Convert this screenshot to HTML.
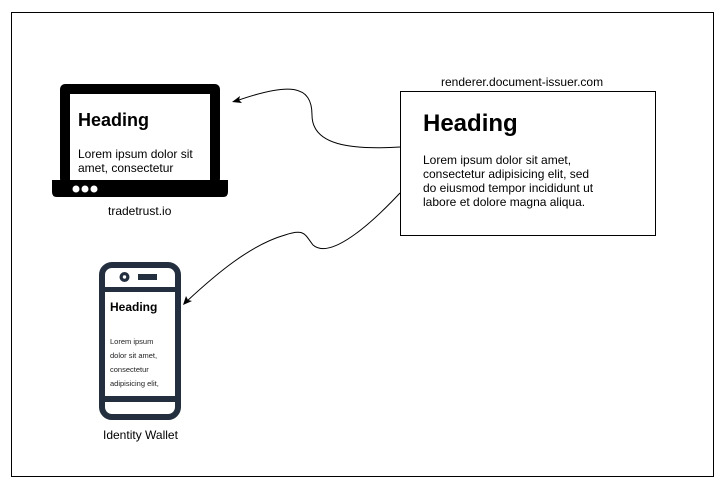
<!DOCTYPE html><html><head><style>body{margin:0;background:#fff;width:727px;height:495px;overflow:hidden}svg{display:block}text{font-family:"Liberation Sans",sans-serif}</style></head><body>
<svg width="727" height="495" viewBox="0 0 727 495">
<rect x="11.5" y="12.5" width="702" height="464" fill="#fff" stroke="#000"/>
<rect x="400.5" y="91.5" width="255" height="144" fill="#fff" stroke="#000"/>
<text x="441" y="86" font-size="12">renderer.document-issuer.com</text>
<text x="423" y="131" font-size="24" font-weight="bold">Heading</text>
<text font-size="12"><tspan x="423" y="164">Lorem ipsum dolor sit amet,</tspan><tspan x="423" y="178">consectetur adipisicing elit, sed</tspan><tspan x="423" y="192">do eiusmod tempor incididunt ut</tspan><tspan x="423" y="206">labore et dolore magna aliqua.</tspan></text>
<!-- laptop -->
<rect x="60" y="84" width="160" height="100" rx="5" fill="#000"/>
<rect x="70" y="94" width="140" height="90" fill="#fff"/>
<path d="M52 180H228V192Q228 197 223 197H57Q52 197 52 192Z" fill="#000"/>
<circle cx="76" cy="189" r="3.5" fill="#fff"/><circle cx="85" cy="189" r="3.5" fill="#fff"/><circle cx="94" cy="189" r="3.5" fill="#fff"/>
<text x="78" y="126" font-size="18" font-weight="bold">Heading</text>
<text font-size="12"><tspan x="78" y="158">Lorem ipsum dolor sit</tspan><tspan x="78" y="172">amet, consectetur</tspan></text>
<text x="108" y="215" font-size="12">tradetrust.io</text>
<!-- phone -->
<rect x="102" y="265" width="76" height="152" rx="10" fill="#fff" stroke="#232f3e" stroke-width="6"/>
<rect x="102" y="287" width="76" height="5" fill="#232f3e"/>
<rect x="102" y="396" width="76" height="6" fill="#232f3e"/>
<circle cx="124.5" cy="277" r="5" fill="#232f3e"/><circle cx="124.5" cy="277" r="1.7" fill="#fff"/>
<rect x="138" y="274" width="19" height="6" fill="#232f3e"/>
<text x="110" y="311" font-size="12" font-weight="bold">Heading</text>
<text font-size="7.5" fill="#222"><tspan x="110" y="344">Lorem ipsum</tspan><tspan x="110" y="358">dolor sit amet,</tspan><tspan x="110" y="372">consectetur</tspan><tspan x="110" y="386">adipisicing elit,</tspan></text>
<text x="103" y="439" font-size="12">Identity Wallet</text>
<!-- arrows -->
<path d="M400 147C350 150 312 145 312 115C312 85 290 82 236 101" fill="none" stroke="#000" stroke-width="1"/>
<path d="M232 102l8-6-1 4 3 3z" fill="#000"/>
<path d="M400 193C370 225 330 260 313 245C305 235 305 228 285 235C250 245 215 275 186 302" fill="none" stroke="#000" stroke-width="1"/>
<path d="M183 305l3-9 2 4 4 1z" fill="#000"/>
</svg></body></html>
